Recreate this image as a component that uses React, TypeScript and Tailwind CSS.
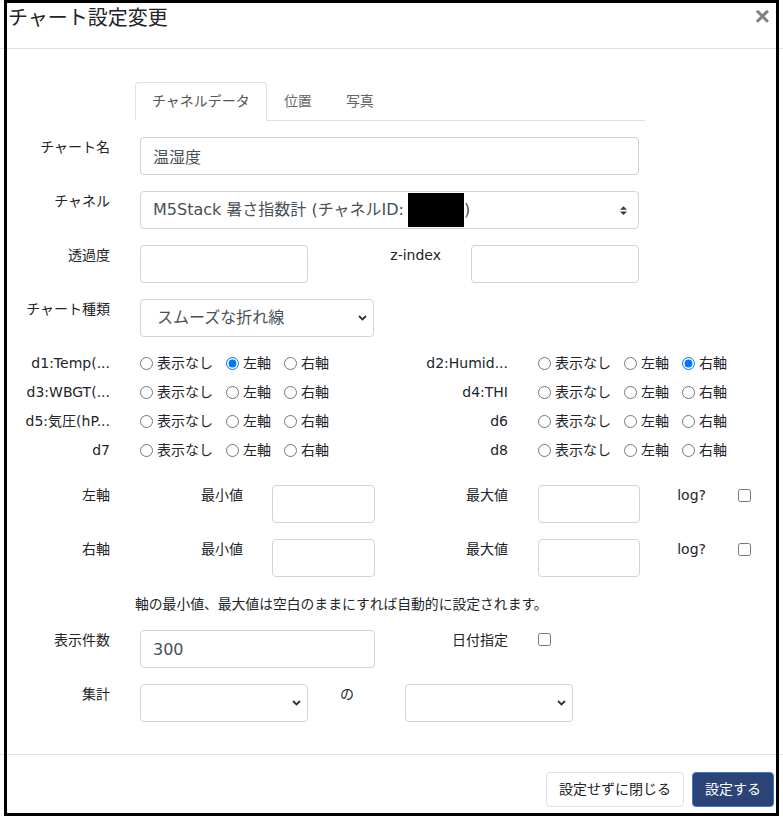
import React from "react";

const field =
  "h-[38px] shrink-0 rounded-[4px] border border-[#ced4da] bg-white px-[12px] text-[16px] text-[#495057] outline-none";

function Label({ w = "w-[110px]", children }: { w?: string; children?: React.ReactNode }) {
  return (
    <div className={`${w} shrink-0 text-right text-[14px] leading-[21px] text-[#212529]`}>
      {children}
    </div>
  );
}

function Chevron() {
  return (
    <svg className="ml-auto mr-[6px]" width="9" height="6" viewBox="0 0 9 6">
      <path d="M1 1l3.5 3.5L8 1" fill="none" stroke="#333" strokeWidth="1.8" />
    </svg>
  );
}

function Radio({ name, label, checked }: { name: string; label: string; checked?: boolean }) {
  return (
    <label className="flex items-center">
      <input
        type="radio"
        name={name}
        defaultChecked={checked}
        className="m-0 h-[13px] w-[13px]"
      />
      <span className="ml-[4px]">{label}</span>
    </label>
  );
}

function RadioGroup({ name, value }: { name: string; value: number }) {
  const opts = ["表示なし", "左軸", "右軸"];
  return (
    <div className="ml-[30px] flex w-[229px] shrink-0 items-center gap-[13px] text-[14px] text-[#212529]">
      {opts.map((o, i) => (
        <Radio key={o} name={name} label={o} checked={i === value} />
      ))}
    </div>
  );
}

// -1 = nothing selected
const series: [string, number, string, number][] = [
  ["d1:Temp(...", 1, "d2:Humid...", 2],
  ["d3:WBGT(...", -1, "d4:THI", -1],
  ["d5:気圧(hP...", -1, "d6", -1],
  ["d7", -1, "d8", -1],
];

function AxisRow({ name }: { name: string }) {
  return (
    <div className="flex h-[38px]">
      <Label>{name}</Label>
      <Label w="w-[133px]">最小値</Label>
      <input className={`ml-[29px] w-[103px] ${field}`} />
      <Label w="w-[133px]">最大値</Label>
      <input className={`ml-[30px] w-[102px] ${field}`} />
      <Label w="w-[66px]">log?</Label>
      <input type="checkbox" className="ml-[32px] mt-[4px] h-[13px] w-[13px]" />
    </div>
  );
}

export default function App() {
  return (
    <div className="relative h-[819px] w-[783px] overflow-hidden bg-white font-['DejaVu_Sans','Noto_Sans_CJK_JP',sans-serif] text-[#212529]">
      {/* Header */}
      <div className="flex h-[49px] items-start justify-between border-b border-[#dee2e6] pl-[8px] pr-[13px]">
        <h5 className="pt-[3px] text-[20px] leading-[30px] font-normal">チャート設定変更</h5>
        <button className="mt-[4px] font-['Liberation_Sans',sans-serif] text-[26px] leading-[24px] font-bold text-[#808080]">
          ×
        </button>
      </div>

      {/* Body */}
      <div className="pb-[32px]">
        {/* Tabs */}
        <div className="ml-[135px] mt-[33px] flex w-[510px] border-b border-[#dee2e6] text-[14px] leading-[21px]">
          <div className="-mb-px rounded-t-[4px] border border-[#dee2e6] border-b-white bg-white px-[16px] py-[8px] text-[#555]">
            チャネルデータ
          </div>
          <div className="-mb-px border border-transparent px-[16px] py-[8px] text-[#666]">位置</div>
          <div className="-mb-px border border-transparent px-[16px] py-[8px] text-[#666]">写真</div>
        </div>

        <div className="mt-[16px] flex h-[38px]">
          <Label>チャート名</Label>
          <input className={`ml-[30px] w-[499px] ${field}`} defaultValue="温湿度" />
        </div>

        <div className="mt-[16px] flex h-[38px]">
          <Label>チャネル</Label>
          <div className={`ml-[30px] flex w-[499px] items-center ${field} whitespace-nowrap`}>
            <span>M5Stack 暑さ指数計 (チャネルID:</span>
            <span className="ml-[4px] inline-block h-[34px] w-[56px] bg-black" />
            <span>)</span>
            <svg className="ml-auto mr-[-1px]" width="7" height="9" viewBox="0 0 4 5">
              <path d="M2 0L0 2h4zm0 5L0 3h4z" fill="#343a40" />
            </svg>
          </div>
        </div>

        <div className="mt-[16px] flex h-[38px]">
          <Label>透過度</Label>
          <input className={`ml-[30px] w-[168px] ${field}`} />
          <Label w="w-[133px]">z-index</Label>
          <input className={`ml-[30px] w-[168px] ${field}`} />
        </div>

        <div className="mt-[16px] flex h-[38px]">
          <Label>チャート種類</Label>
          <div className={`ml-[30px] flex w-[234px] items-center ${field} pl-[16px] pr-0`}>
            <span>スムーズな折れ線</span>
            <Chevron />
          </div>
        </div>

        {/* Series radios */}
        <div className="mt-[12px]">
          {series.map(([l, lv, r, rv], i) => (
            <div key={l} className="flex h-[29px] items-center">
              <Label>{l}</Label>
              <RadioGroup name={`s${i}a`} value={lv} />
              <Label w="w-[139px]">{r}</Label>
              <RadioGroup name={`s${i}b`} value={rv} />
            </div>
          ))}
        </div>

        <div className="mt-[20px]">
          <AxisRow name="左軸" />
        </div>
        <div className="mt-[16px]">
          <AxisRow name="右軸" />
        </div>

        <p className="ml-[135px] mt-[17px] text-[13.8px] leading-[21px]">
          軸の最小値、最大値は空白のままにすれば自動的に設定されます。
        </p>

        <div className="mt-[15px] flex h-[38px]">
          <Label>表示件数</Label>
          <input className={`ml-[30px] w-[235px] ${field}`} defaultValue="300" />
          <Label w="w-[133px]">日付指定</Label>
          <input type="checkbox" className="ml-[30px] mt-[3px] h-[13px] w-[13px]" />
        </div>

        <div className="mt-[16px] flex h-[38px]">
          <Label>集計</Label>
          <div className={`ml-[30px] flex w-[168px] items-center ${field} pr-0`}>
            <Chevron />
          </div>
          <div className="ml-[32px] w-[14px] shrink-0 text-[14px] leading-[21px]">の</div>
          <div className={`ml-[51px] flex w-[168px] items-center ${field} pr-0`}>
            <Chevron />
          </div>
        </div>
      </div>

      {/* Footer */}
      <div className="flex justify-end gap-[8px] border-t border-[#dee2e6] pr-[9px] pt-[17px]">
        <button className="h-[35px] rounded-[4px] border border-[#dee2e6] bg-white px-[12px] text-[14px] leading-[21px] text-[#212529]">
          設定せずに閉じる
        </button>
        <button className="h-[35px] rounded-[4px] border border-[#3b78d8] bg-[#2c4475] px-[12px] text-[14px] leading-[21px] text-white">
          設定する
        </button>
      </div>

      {/* black frame drawn over the screenshot */}
      <div className="pointer-events-none absolute left-[4px] top-0 h-[816px] w-[775px] border-[3px] border-black" />
    </div>
  );
}
